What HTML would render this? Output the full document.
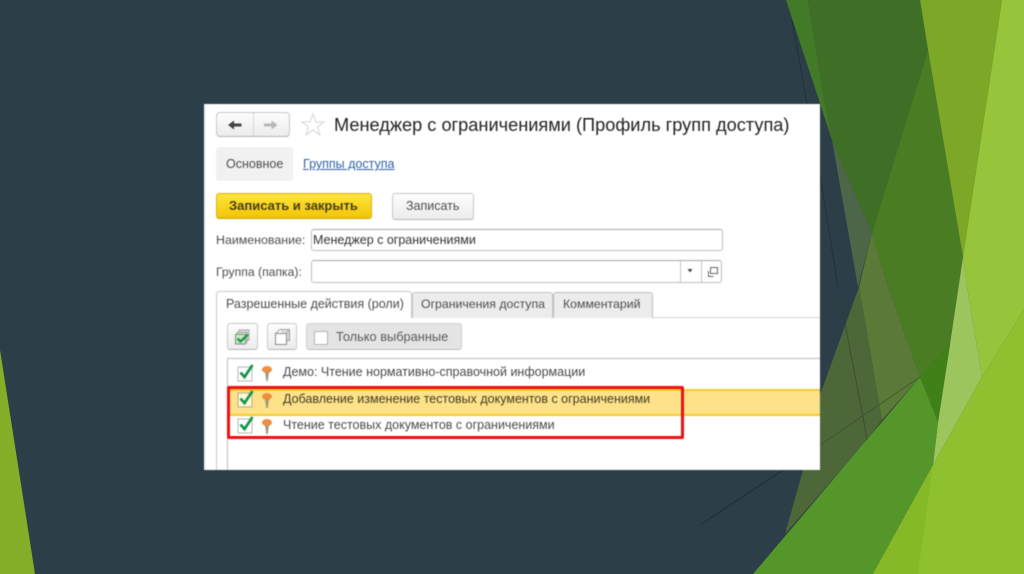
<!DOCTYPE html>
<html lang="ru">
<head>
<meta charset="utf-8">
<style>
html,body{margin:0;padding:0;width:1024px;height:574px;overflow:hidden;background:#2c3e48}
body{position:relative;font-family:"Liberation Sans","DejaVu Sans",sans-serif}
svg.bg{position:absolute;left:0;top:0}
#win{position:absolute;left:204px;top:104px;width:616px;height:366px;background:#fff;overflow:hidden}
#win div{position:absolute;white-space:nowrap;box-sizing:border-box}
.txt{color:#4d4d4d;font-size:12.500px;line-height:14px}
.btn{background:linear-gradient(#fdfdfd,#ececec);border:1px solid #c8c8c8;border-bottom-color:#b4b4b4;border-radius:3px}
.inp{background:#fff;border:1px solid #bdbdbd;border-top-color:#a8a8a8;border-radius:3px}
svg.i{position:absolute}
</style>
</head>
<body>
<svg class="bg" width="1024" height="574" viewBox="0 0 1024 574">
  <polygon points="0,350 0,574 35,574" fill="#85ad27"/>
  <polyline points="792,20 807,104" stroke="#1e2c30" stroke-width="1" fill="none" opacity=".7"/>
  <polyline points="820,175 838,287" stroke="#1e2c30" stroke-width="1" fill="none" opacity=".7"/>
  <polygon points="786,0 808,0 824,100 832,140" fill="#437a28"/>
  <polygon points="832,140 872,233 858,287" fill="#4d6647"/>
  <polygon points="808,0 920,0 928,50 872,233 832,140 824,100" fill="#3f6f26"/>
  <polygon points="928,50 963,257 950,344 920,377 888,287 872,233" fill="#4a7c23"/>
  <polygon points="920,0 1002,0 963,257 928,50" fill="#7ca727"/>
  <polygon points="1002,0 1024,0 1024,310 982,377 967,287 963,257" fill="#96c43a"/>
  <polygon points="872,233 888,287 920,377 882,420 859,287" fill="#5b7a38"/>
  <polygon points="859,287 882,420 867,440 785,534 820,410 820,395" fill="#4e6739"/>
  <polygon points="963,257 967,287 982,377 933,465 938,422 950,344" fill="#9cc55e"/>
  <polygon points="950,344 938,422 920,377" fill="#3f8019"/>
  <polygon points="920,377 938,422 933,465 873,574 753,574" fill="#55962a"/>
  <polygon points="1024,310 982,377 933,465 873,574 1024,574" fill="#8fc02f"/>
  <polygon points="933,465 873,574 918,574" fill="#85b928"/>
  <polyline points="838,287 863,417 867,440" stroke="#2e4030" stroke-width="1" fill="none" opacity=".6"/>
  <polyline points="700,525 783,470" stroke="#1c2a2f" stroke-width="1" fill="none" opacity=".8"/>
  <polyline points="820,445 920,377" stroke="#33492e" stroke-width="1" fill="none" opacity=".6"/>
</svg>

<div id="win" style="filter:blur(.4px)">
  <div style="left:0;top:0;width:2px;height:366px;background:#eef5f8"></div>
  <!-- nav buttons -->
  <div class="btn" style="left:12px;top:8px;width:74px;height:25px;border-radius:4px"></div>
  <div style="left:49px;top:9px;width:1px;height:23px;background:#d6d6d6"></div>
  <svg class="i" style="left:24px;top:15px" width="16" height="12" viewBox="0 0 16 12"><path d="M0 6L6 1.500V4.500H13.500V7.500H6V10.500Z" fill="#444"/></svg>
  <svg class="i" style="left:59px;top:15px" width="16" height="12" viewBox="0 0 16 12"><path d="M14.500 6L8.500 1.500V4.500H1V7.500H8.500V10.500Z" fill="#b8b8b8"/></svg>
  <svg class="i" style="left:96px;top:8px" width="26" height="25" viewBox="0 0 26 25"><path d="M13 2L16 10H24L17.500 15L20 23L13 18L6 23L8.500 15L2 10H10Z" fill="#fff" stroke="#dcdcdc" stroke-width="1.200"/></svg>
  <div style="left:130px;top:10px;font-size:18.200px;line-height:22px;color:#222">Менеджер с ограничениями (Профиль групп доступа)</div>

  <!-- section tabs -->
  <div style="left:12px;top:43px;width:77px;height:34px;background:#f1f1f1;border-radius:3px"></div>
  <div class="txt" style="left:22px;top:53px">Основное</div>
  <div style="left:99px;top:53px;font-size:12.500px;line-height:14px;color:#2f5fa8;text-decoration:underline">Группы доступа</div>

  <!-- action buttons -->
  <div style="left:12px;top:89px;width:156px;height:26px;border-radius:3px;background:linear-gradient(#fde53c,#f2c506);border:1px solid #d8b414;border-bottom-color:#c6a412"></div>
  <div style="left:25px;top:94px;font-size:13px;line-height:15px;font-weight:bold;color:#4a3d10">Записать и закрыть</div>
  <div class="btn" style="left:188px;top:89px;width:82px;height:27px"></div>
  <div class="txt" style="left:202px;top:95px;line-height:15px">Записать</div>

  <!-- fields -->
  <div class="txt" style="left:12px;top:129px;font-size:12.400px">Наименование:</div>
  <div class="inp" style="left:107px;top:125px;width:412px;height:22px"></div>
  <div style="left:109px;top:129px;font-size:12.500px;line-height:14px;color:#333">Менеджер с ограничениями</div>
  <div class="txt" style="left:12px;top:161px;font-size:12.200px">Группа (папка):</div>
  <div class="inp" style="left:107px;top:156px;width:411px;height:23px"></div>
  <div style="left:476px;top:157px;width:1px;height:21px;background:#c6c6c6"></div>
  <div style="left:497px;top:157px;width:1px;height:21px;background:#c6c6c6"></div>
  <svg class="i" style="left:481px;top:163px" width="10" height="8" viewBox="0 0 10 8"><path d="M2.500 2H7.500L5 5.500Z" fill="#444"/></svg>
  <svg class="i" style="left:500px;top:161px" width="16" height="14" viewBox="0 0 16 14"><path d="M6.500 2.500H13.500V8.500H6.500Z M4.500 6V11.500H9.500" fill="none" stroke="#666" stroke-width="1"/></svg>

  <!-- tabs -->
  <div style="left:207px;top:213px;width:409px;height:1px;background:#d4d4d4"></div>
  <div style="left:208px;top:188px;width:141px;height:26px;background:#ececec;border:1px solid #c4c4c4;border-bottom:0;border-radius:3px 3px 0 0"></div>
  <div style="left:349px;top:188px;width:100px;height:26px;background:#ececec;border:1px solid #bdbdbd;border-bottom:0;border-radius:3px 3px 0 0"></div>
  <div style="left:12px;top:187px;width:196px;height:27px;background:#fff;border:1px solid #c8c8c8;border-bottom:0;border-radius:3px 3px 0 0"></div>
  <div style="left:12px;top:213px;width:1px;height:153px;background:#c8c8c8"></div>
  <div class="txt" style="left:22px;top:193px">Разрешенные действия (роли)</div>
  <div class="txt" style="left:217px;top:193px;font-size:12.300px">Ограничения доступа</div>
  <div class="txt" style="left:359px;top:193px;font-size:12.300px">Комментарий</div>

  <!-- toolbar -->
  <div class="btn" style="left:23px;top:219px;width:31px;height:27px"></div>
  <svg class="i" style="left:30px;top:224px" width="18" height="18" viewBox="0 0 18 18"><path d="M5 2H15V12H5Z" fill="#dcdcdc" stroke="#a8a8a8"/><path d="M3 4.500H13V14.500H3Z" fill="#e7e7e7" stroke="#a0a0a0"/><path d="M1.500 6.500H11.500V16H1.500Z" fill="#cfe5cf" stroke="#6b9a76"/><path d="M3.500 10.500L6.500 13.500L14 6.500" fill="none" stroke="#1f9a3f" stroke-width="2.400"/></svg>
  <div class="btn" style="left:63px;top:219px;width:30px;height:27px"></div>
  <svg class="i" style="left:70px;top:224px" width="17" height="18" viewBox="0 0 17 18"><path d="M6 1.500H15.500V12.500H13" fill="#ddd" stroke="#a0a0a0"/><path d="M1.500 5.500L6 1.500M12.500 5.500L15.500 1.500" stroke="#aaa" fill="none"/><path d="M1.500 5.500H12.500V16.500H1.500Z" fill="#fff" stroke="#8a8a8a"/></svg>
  <div style="left:102px;top:219px;width:156px;height:27px;background:#e4e4e4;border:1px solid #cfcfcf;border-bottom-color:#bcbcbc;border-radius:3px"></div>
  <div style="left:110px;top:227px;width:14px;height:14px;background:#fff;border:1px solid #b5b5b5"></div>
  <div class="txt" style="left:132px;top:226px;font-size:12.800px;color:#5a5a5a">Только выбранные</div>

  <!-- list -->
  <div style="left:23px;top:254px;width:593px;height:112px;background:#fff;border:1px solid #bcbcbc;border-right:0;border-bottom:0"></div>
  <div style="left:24px;top:285px;width:592px;height:27px;background:#fde28a;border-top:2px solid #f7c92a;border-bottom:2px solid #f7c92a"></div>

  <div class="txt" style="left:79px;top:261px;color:#4a4a4a">Демо: Чтение нормативно-справочной информации</div>
  <div class="txt" style="left:79px;top:288px;color:#443d22">Добавление изменение тестовых документов с ограничениями</div>
  <div class="txt" style="left:79px;top:314px;color:#4a4a4a">Чтение тестовых документов с ограничениями</div>

  <!-- check icons -->
  <svg class="i" style="left:33px;top:259px" width="20" height="19" viewBox="0 0 20 19"><rect x="1" y="4" width="14" height="14" fill="#fff" stroke="#b0b8b2"/><path d="M3.500 9.500L7.500 14L15.500 2" fill="none" stroke="#12964a" stroke-width="2.700"/></svg>
  <svg class="i" style="left:33px;top:285px" width="20" height="19" viewBox="0 0 20 19"><rect x="1" y="4" width="14" height="14" fill="#fff7d8" stroke="#b0ac90"/><path d="M3.500 9.500L7.500 14L15.500 2" fill="none" stroke="#12964a" stroke-width="2.700"/></svg>
  <svg class="i" style="left:33px;top:311px" width="20" height="19" viewBox="0 0 20 19"><rect x="1" y="4" width="14" height="14" fill="#fff" stroke="#b0b8b2"/><path d="M3.500 9.500L7.500 14L15.500 2" fill="none" stroke="#12964a" stroke-width="2.700"/></svg>

  <!-- pin icons -->
  <svg class="i" style="left:56px;top:261px" width="14" height="17" viewBox="0 0 14 17"><ellipse cx="7" cy="4.500" rx="5" ry="3.500" fill="#ee8f3c"/><path d="M5 7H9L7.800 16H6.200Z" fill="#a39a80"/></svg>
  <svg class="i" style="left:56px;top:288px" width="14" height="17" viewBox="0 0 14 17"><ellipse cx="7" cy="4.500" rx="5" ry="3.500" fill="#ee8f3c"/><path d="M5 7H9L7.800 16H6.200Z" fill="#a39a70"/></svg>
  <svg class="i" style="left:56px;top:314px" width="14" height="17" viewBox="0 0 14 17"><ellipse cx="7" cy="4.500" rx="5" ry="3.500" fill="#ee8f3c"/><path d="M5 7H9L7.800 16H6.200Z" fill="#a39a80"/></svg>

  <!-- red highlight -->
  <div style="left:23px;top:282px;width:457px;height:53px;border:3px solid #f00d12;border-radius:2px"></div>
</div>
</body>
</html>
